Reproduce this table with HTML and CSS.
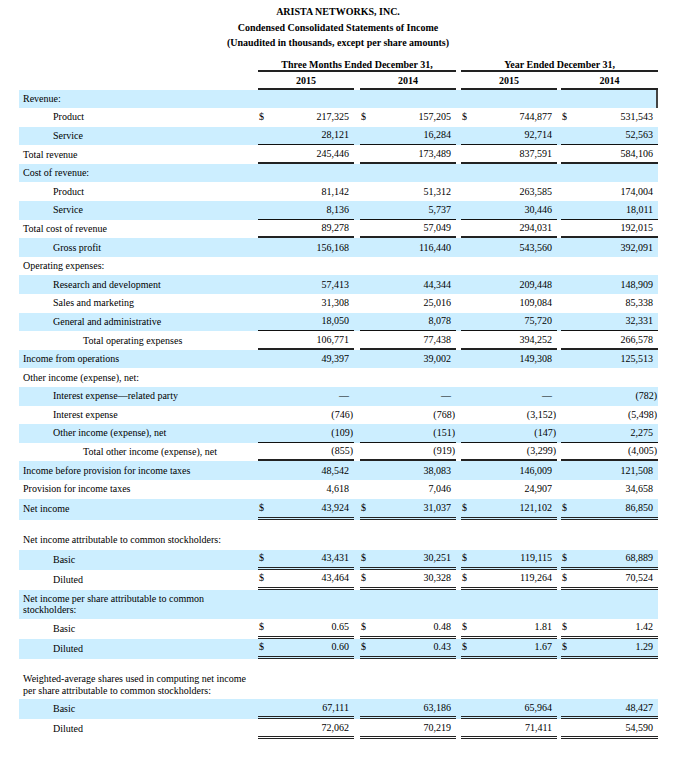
FILE: index.html
```html
<!DOCTYPE html>
<html lang="en">
<head>
<meta charset="utf-8">
<title>Arista Networks - Condensed Consolidated Statements of Income</title>
<link rel="stylesheet" href="styles.css">
</head>
<body>
<div class="title">
  <div>ARISTA NETWORKS, INC.</div>
  <div>Condensed Consolidated Statements of Income</div>
  <div>(Unaudited in thousands, except per share amounts)</div>
</div>
<table class="stmt">
  <colgroup>
    <col class="c-lbl"><col class="c-v"><col class="c-g1"><col class="c-v"><col class="c-g2"><col class="c-v"><col class="c-g3"><col class="c-v4">
  </colgroup>
  <tr class="h1">
    <td></td><td class="hd" colspan="3">Three Months Ended December 31,</td><td></td><td class="hd" colspan="3">Year Ended December 31,</td>
  </tr>
  <tr class="h2">
    <td></td><td class="hy">2015</td><td></td><td class="hy">2014</td><td></td><td class="hy">2015</td><td></td><td class="hy">2014</td>
  </tr>
  <tr class="b"><td class="lbl">Revenue:</td><td></td><td></td><td></td><td></td><td></td><td></td><td class="bar"></td></tr>
  <tr><td class="lbl i2">Product</td><td class="v"><span class="cur">$</span>217,325</td><td></td><td class="v"><span class="cur">$</span>157,205</td><td></td><td class="v"><span class="cur">$</span>744,877</td><td></td><td class="v"><span class="cur">$</span>531,543</td></tr>
  <tr class="b u1"><td class="lbl i2">Service</td><td class="v">28,121</td><td></td><td class="v">16,284</td><td></td><td class="v">92,714</td><td></td><td class="v">52,563</td></tr>
  <tr class="u2"><td class="lbl">Total revenue</td><td class="v">245,446</td><td></td><td class="v">173,489</td><td></td><td class="v">837,591</td><td></td><td class="v">584,106</td></tr>
  <tr class="b"><td class="lbl">Cost of revenue:</td><td></td><td></td><td></td><td></td><td></td><td></td><td></td></tr>
  <tr><td class="lbl i2">Product</td><td class="v">81,142</td><td></td><td class="v">51,312</td><td></td><td class="v">263,585</td><td></td><td class="v">174,004</td></tr>
  <tr class="b u1"><td class="lbl i2">Service</td><td class="v">8,136</td><td></td><td class="v">5,737</td><td></td><td class="v">30,446</td><td></td><td class="v">18,011</td></tr>
  <tr class="u2"><td class="lbl">Total cost of revenue</td><td class="v">89,278</td><td></td><td class="v">57,049</td><td></td><td class="v">294,031</td><td></td><td class="v">192,015</td></tr>
  <tr class="b"><td class="lbl i2">Gross profit</td><td class="v">156,168</td><td></td><td class="v">116,440</td><td></td><td class="v">543,560</td><td></td><td class="v">392,091</td></tr>
  <tr><td class="lbl">Operating expenses:</td><td></td><td></td><td></td><td></td><td></td><td></td><td></td></tr>
  <tr class="b"><td class="lbl i2">Research and development</td><td class="v">57,413</td><td></td><td class="v">44,344</td><td></td><td class="v">209,448</td><td></td><td class="v">148,909</td></tr>
  <tr><td class="lbl i2">Sales and marketing</td><td class="v">31,308</td><td></td><td class="v">25,016</td><td></td><td class="v">109,084</td><td></td><td class="v">85,338</td></tr>
  <tr class="b u1"><td class="lbl i2">General and administrative</td><td class="v">18,050</td><td></td><td class="v">8,078</td><td></td><td class="v">75,720</td><td></td><td class="v">32,331</td></tr>
  <tr class="u2"><td class="lbl i3">Total operating expenses</td><td class="v">106,771</td><td></td><td class="v">77,438</td><td></td><td class="v">394,252</td><td></td><td class="v">266,578</td></tr>
  <tr class="b"><td class="lbl">Income from operations</td><td class="v">49,397</td><td></td><td class="v">39,002</td><td></td><td class="v">149,308</td><td></td><td class="v">125,513</td></tr>
  <tr><td class="lbl">Other income (expense), net:</td><td></td><td></td><td></td><td></td><td></td><td></td><td></td></tr>
  <tr class="b"><td class="lbl i2">Interest expense—related party</td><td class="v">—</td><td></td><td class="v">—</td><td></td><td class="v">—</td><td></td><td class="v n">(782)</td></tr>
  <tr><td class="lbl i2">Interest expense</td><td class="v n">(746)</td><td></td><td class="v n">(768)</td><td></td><td class="v n">(3,152)</td><td></td><td class="v n">(5,498)</td></tr>
  <tr class="b u1"><td class="lbl i2">Other income (expense), net</td><td class="v n">(109)</td><td></td><td class="v n">(151)</td><td></td><td class="v n">(147)</td><td></td><td class="v">2,275</td></tr>
  <tr class="u2"><td class="lbl i3">Total other income (expense), net</td><td class="v n">(855)</td><td></td><td class="v n">(919)</td><td></td><td class="v n">(3,299)</td><td></td><td class="v n">(4,005)</td></tr>
  <tr class="b"><td class="lbl">Income before provision for income taxes</td><td class="v">48,542</td><td></td><td class="v">38,083</td><td></td><td class="v">146,009</td><td></td><td class="v">121,508</td></tr>
  <tr><td class="lbl">Provision for income taxes</td><td class="v">4,618</td><td></td><td class="v">7,046</td><td></td><td class="v">24,907</td><td></td><td class="v">34,658</td></tr>
  <tr class="b u3 net"><td class="lbl">Net income</td><td class="v"><span class="cur">$</span>43,924</td><td></td><td class="v"><span class="cur">$</span>31,037</td><td></td><td class="v"><span class="cur">$</span>121,102</td><td></td><td class="v"><span class="cur">$</span>86,850</td></tr>
  <tr class="sp"><td colspan="8"></td></tr>
  <tr><td class="lbl">Net income attributable to common stockholders:</td><td></td><td></td><td></td><td></td><td></td><td></td><td></td></tr>
  <tr class="b u3"><td class="lbl i2">Basic</td><td class="v"><span class="cur">$</span>43,431</td><td></td><td class="v"><span class="cur">$</span>30,251</td><td></td><td class="v"><span class="cur">$</span>119,115</td><td></td><td class="v"><span class="cur">$</span>68,889</td></tr>
  <tr class="u3"><td class="lbl i2">Diluted</td><td class="v"><span class="cur">$</span>43,464</td><td></td><td class="v"><span class="cur">$</span>30,328</td><td></td><td class="v"><span class="cur">$</span>119,264</td><td></td><td class="v"><span class="cur">$</span>70,524</td></tr>
  <tr class="b tall"><td class="lbl">Net income per share attributable to common<br>stockholders:</td><td></td><td></td><td></td><td></td><td></td><td></td><td></td></tr>
  <tr class="u3"><td class="lbl i2">Basic</td><td class="v"><span class="cur">$</span>0.65</td><td></td><td class="v"><span class="cur">$</span>0.48</td><td></td><td class="v"><span class="cur">$</span>1.81</td><td></td><td class="v"><span class="cur">$</span>1.42</td></tr>
  <tr class="b u3"><td class="lbl i2">Diluted</td><td class="v"><span class="cur">$</span>0.60</td><td></td><td class="v"><span class="cur">$</span>0.43</td><td></td><td class="v"><span class="cur">$</span>1.67</td><td></td><td class="v"><span class="cur">$</span>1.29</td></tr>
  <tr class="sp"><td colspan="8"></td></tr>
  <tr class="tall"><td class="lbl">Weighted-average shares used in computing net income<br>per share attributable to common stockholders:</td><td></td><td></td><td></td><td></td><td></td><td></td><td></td></tr>
  <tr class="b u3"><td class="lbl i2">Basic</td><td class="v">67,111</td><td></td><td class="v">63,186</td><td></td><td class="v">65,964</td><td></td><td class="v">48,427</td></tr>
  <tr class="u3"><td class="lbl i2">Diluted</td><td class="v">72,062</td><td></td><td class="v">70,219</td><td></td><td class="v">71,411</td><td></td><td class="v">54,590</td></tr>
</table>
</body>
</html>
```
FILE: styles.css
```css
html, body {
  margin: 0;
  padding: 0;
  background: #ffffff;
}
body {
  font-family: "Liberation Serif", "Times New Roman", serif;
  font-size: 10px;
  color: #000;
}
.title {
  text-align: center;
  font-weight: bold;
  padding-top: 4px;
  line-height: 15.5px;
}
.stmt {
  margin-left: 19px;
  width: 639px;
  table-layout: fixed;
  border-collapse: separate;
  border-spacing: 0;
}
.c-lbl { width: 239px; }
.c-v { width: 96px; }
.c-v4 { width: 97px; }
.c-g1 { width: 6px; }
.c-g2 { width: 5px; }
.c-g3 { width: 4px; }

.stmt td {
  padding: 0;
  height: 18.6px;
  box-sizing: border-box;
  vertical-align: middle;
  white-space: nowrap;
  line-height: 12px;
}
.stmt .h1 td {
  height: 21px;
  vertical-align: bottom;
  line-height: 10px;
}
.stmt .h2 td {
  height: 18px;
  padding-top: 2px;
}
.hd, .hy {
  font-weight: bold;
  text-align: center;
  border-bottom: 2px solid #222;
}
.stmt .lbl { padding-left: 4px; }
.stmt .i2 { padding-left: 34px; }
.stmt .i3 { padding-left: 64px; }
.stmt .v {
  text-align: right;
  padding-right: 5px;
}
.stmt .v.n { padding-right: 1px; }
.cur {
  float: left;
  margin-left: 1px;
}
.b td { background: #cceeff; }
.bar { box-shadow: inset -2px 0 0 #444; }

.u1 .v { border-bottom: 1px solid #111; }
.u2 .v { border-bottom: 2px solid #222; }
.u3 .v { border-bottom: 3px double #222; }
.stmt .u3 td { height: 20px; }
.stmt .net td { height: 21px; }
.stmt .sp td { height: 11.5px; }
.stmt .tall td {
  height: 29px;
  line-height: 11.5px;
  white-space: normal;
}
```
